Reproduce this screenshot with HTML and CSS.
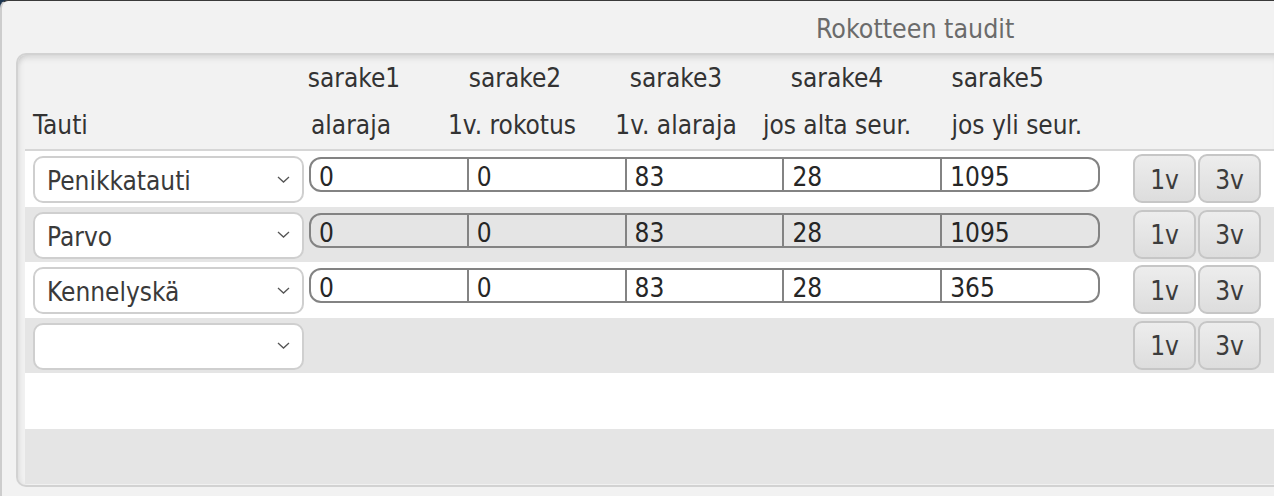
FILE: index.html
```html
<!DOCTYPE html>
<html lang="fi">
  <head>
    <meta charset="UTF-8" />
    <meta name="viewport" content="width=device-width, initial-scale=1.0" />
    <title>Rokotteen taudit</title>
    <link rel="stylesheet" href="styles.css">
  </head>
  <body>
    <div class="window">
      <h1 class="title">Rokotteen taudit</h1>
      <div class="panel">
        <div class="head">
          <span class="col c1 r1">sarake1</span>
          <span class="col c2 r1">sarake2</span>
          <span class="col c3 r1">sarake3</span>
          <span class="col c4 r1">sarake4</span>
          <span class="col c5 r1">sarake5</span>
          <span class="tauti">Tauti</span>
          <span class="col c1 r2">alaraja</span>
          <span class="col c2 r2">1v. rokotus</span>
          <span class="col c3 r2">1v. alaraja</span>
          <span class="col c4 r2">jos alta seur.</span>
          <span class="col c5 r2">jos yli seur.</span>
        </div>
        <div class="rows">
          <div class="row">
            <div class="select"><span>Penikkatauti</span><svg class="chev" viewBox="0 0 13 7"><polyline points="1,1 6.5,6 12,1" /></svg></div>
            <div class="fields">
              <span class="cell">0</span><span class="cell">0</span><span class="cell">83</span><span class="cell">28</span><span class="cell">1095</span>
            </div>
            <div class="buttons"><button>1v</button><button>3v</button></div>
          </div>
          <div class="row alt">
            <div class="select"><span>Parvo</span><svg class="chev" viewBox="0 0 13 7"><polyline points="1,1 6.5,6 12,1" /></svg></div>
            <div class="fields">
              <span class="cell">0</span><span class="cell">0</span><span class="cell">83</span><span class="cell">28</span><span class="cell">1095</span>
            </div>
            <div class="buttons"><button>1v</button><button>3v</button></div>
          </div>
          <div class="row">
            <div class="select"><span>Kennelyskä</span><svg class="chev" viewBox="0 0 13 7"><polyline points="1,1 6.5,6 12,1" /></svg></div>
            <div class="fields">
              <span class="cell">0</span><span class="cell">0</span><span class="cell">83</span><span class="cell">28</span><span class="cell">365</span>
            </div>
            <div class="buttons"><button>1v</button><button>3v</button></div>
          </div>
          <div class="row alt">
            <div class="select"><span></span><svg class="chev" viewBox="0 0 13 7"><polyline points="1,1 6.5,6 12,1" /></svg></div>
            <div class="fields empty"></div>
            <div class="buttons"><button>1v</button><button>3v</button></div>
          </div>
          <div class="row"></div>
          <div class="row alt"></div>
        </div>
      </div>
    </div>
  </body>
</html>
```

FILE: styles.css
```css
* {
  box-sizing: border-box;
  font-family: "DejaVu Sans Condensed", "DejaVu Sans", sans-serif;
  font-stretch: condensed;
}
body {
  margin: 0;
  background-color: #1c3550;
  font-size: 26px;
  color: #333;
  overflow: hidden;
}
.window {
  height: 496px;
  background-color: #f2f2f2;
  border-top: 1px solid #3a3a3a;
  border-left: 2px solid #cdcdcd;
  border-top-left-radius: 8px;
}
.title {
  margin: 0;
  height: 52px;
  padding: 12px 0 0 814px;
  font-size: 26.5px;
  line-height: 31px;
  font-weight: normal;
  color: #6b6b6b;
}
.panel {
  margin-left: 14px;
  height: 434px;
  border: 2px solid #d2d2d2;
  border-right: none;
  border-radius: 10px 0 0 10px;
  background-color: #f2f2f2;
  box-shadow: inset 0 7px 7px -5px rgba(0, 0, 0, 0.14), inset 6px 0 6px -5px rgba(0, 0, 0, 0.1);
}
.head {
  display: grid;
  grid-template-columns: 240.5px repeat(5, 161px);
  grid-template-rows: 47px 47px;
  padding-left: 15px;
  line-height: 47px;
  white-space: nowrap;
}
.head .col {
  text-align: center;
}
.head .c5 {
  text-align: left;
  padding-left: 34px;
}
.head .c1 { grid-column: 2; }
.head .c2 { grid-column: 3; }
.head .c3 { grid-column: 4; }
.head .c4 { grid-column: 5; }
.head .c5 { grid-column: 6; }
.head .r1 { grid-row: 1; }
.head .r2 { grid-row: 2; }
.head .c1.r2 { padding-right: 6px; }
.head .c2.r2 { padding-right: 6px; }
.tauti {
  grid-column: 1;
  grid-row: 2;
}
.rows {
  margin-left: 7px;
  border-top: 2px solid #d6d6d6;
}
.row {
  display: flex;
  align-items: flex-start;
  height: 55.5px;
  padding-left: 8px;
  background-color: #fff;
}
.row.alt {
  background-color: #e5e5e5;
}
.select {
  display: flex;
  align-items: center;
  justify-content: space-between;
  width: 271px;
  height: 47px;
  margin-top: 5px;
  padding: 3px 12px 0 12px;
  background-color: #fff;
  border: 2px solid #cfcfcf;
  border-radius: 10px;
  color: #3a3a3a;
}
.chev {
  width: 13px;
  height: 7px;
  margin-bottom: 4px;
}
.chev polyline {
  fill: none;
  stroke: #555;
  stroke-width: 1.3;
}
.fields {
  display: flex;
  width: 791px;
  height: 35px;
  margin: 6px 0 0 5px;
  border: 2px solid #838383;
  border-radius: 12px;
}
.fields.empty {
  border: none;
}
.cell {
  flex: 1;
  padding: 6px 0 0 8px;
  line-height: 25px;
  color: #262626;
}
.cell + .cell {
  border-left: 2px solid #838383;
}
.buttons {
  display: flex;
  gap: 2px;
  margin: 3px 0 0 33px;
}
button {
  width: 63px;
  height: 49px;
  padding: 2px 0 0;
  font-size: 26px;
  color: #3c3c3c;
  background: linear-gradient(#ededed, #dddddd);
  border: 2px solid #c6c6c6;
  border-radius: 9px;
}
```
